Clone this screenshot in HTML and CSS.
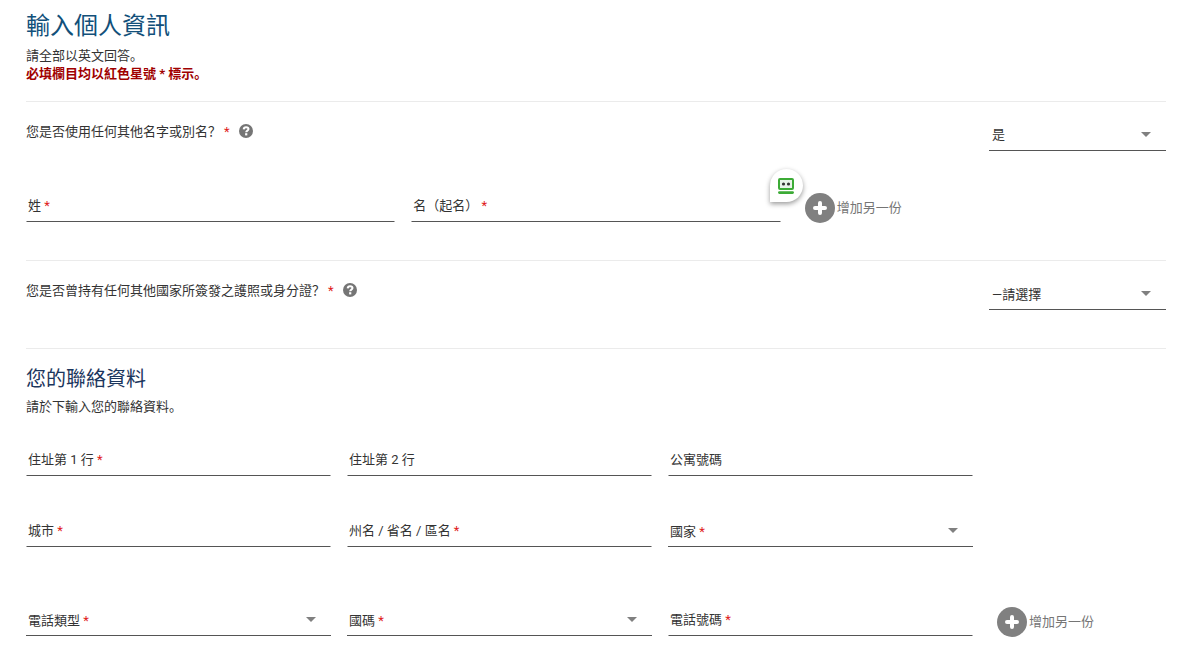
FILE: index.html
```html
<!DOCTYPE html>
<html lang="zh-Hant">
<head>
<meta charset="utf-8">
<meta name="viewport" content="width=device-width, initial-scale=1">
<title>輸入個人資訊</title>
<link rel="stylesheet" href="styles.css">
</head>
<body>
<svg class="sprite" aria-hidden="true">
  <symbol id="help" viewBox="0 0 14 14"><circle cx="7" cy="7" r="7" fill="#757575"/><path d="M4.700 5.400C4.800 3.900 5.800 3.200 7.100 3.200c1.400 0 2.400.8 2.400 1.900 0 1.600-2.300 1.500-2.300 3.200" fill="none" stroke="#fff" stroke-width="2"/><rect x="6.100" y="9.200" width="2.200" height="2.200" fill="#fff"/></symbol>
  <symbol id="plus" viewBox="0 0 30 30"><circle cx="15" cy="15" r="15" fill="#808080"/><path d="M15 10v10M10 15h10" stroke="#fff" stroke-width="4" stroke-linecap="round"/></symbol>
  <symbol id="arrow" viewBox="0 0 10 5"><path d="M0 0h10L5 5z" fill="#808080"/></symbol>
</svg>
<form class="page">
  <header class="intro">
    <h1 class="title">輸入個人資訊</h1>
    <p class="text">請全部以英文回答。</p>
    <p class="text notice">必填欄目均以紅色星號 * 標示。</p>
  </header>

  <section class="section">
    <div class="grid-four">
      <div class="question">
        <label for="alias">您是否使用任何其他名字或別名？<span class="star">*</span></label>
        <button class="help" type="button" aria-label="說明"><svg class="help-icon"><use href="#help"/></svg></button>
      </div>
      <div class="field">
        <select class="control select" id="alias"><option>是</option><option>否</option></select>
        <svg class="arrow"><use href="#arrow"/></svg>
      </div>
    </div>
    <div class="grid-three">
      <div class="field">
        <input class="control" id="surname" type="text">
        <label class="label" for="surname">姓 <span class="star-tight">*</span></label>
      </div>
      <div class="field">
        <input class="control" id="given" type="text">
        <label class="label" for="given">名（起名） <span class="star-tight">*</span></label>
        <button class="badge" type="button" aria-label="自動填寫">
          <svg class="badge-icon" viewBox="0 0 16 16"><rect x="1" y="1" width="14" height="10" rx="1" fill="#e9f3e9" stroke="#3cab36" stroke-width="2"/><circle cx="5.500" cy="6" r="1.600" fill="#333"/><circle cx="10.500" cy="6" r="1.600" fill="#333"/><rect x="0" y="13.200" width="16" height="2.800" rx="1.400" fill="#3cab36"/></svg>
        </button>
      </div>
      <button class="add" type="button"><svg class="add-icon"><use href="#plus"/></svg>增加另一份</button>
    </div>
  </section>

  <section class="section">
    <div class="grid-four">
      <div class="question">
        <label for="passport">您是否曾持有任何其他國家所簽發之護照或身分證？<span class="star">*</span></label>
        <button class="help" type="button" aria-label="說明"><svg class="help-icon"><use href="#help"/></svg></button>
      </div>
      <div class="field">
        <select class="control select placeholder" id="passport"><option>—請選擇</option><option>是</option><option>否</option></select>
        <svg class="arrow"><use href="#arrow"/></svg>
      </div>
    </div>
  </section>

  <section class="section contact">
    <h2 class="subtitle">您的聯絡資料</h2>
    <p class="text">請於下輸入您的聯絡資料。</p>
    <div class="grid-four address">
      <div class="field">
        <input class="control" id="line1" type="text">
        <label class="label" for="line1">住址第 1 行 <span class="star-tight">*</span></label>
      </div>
      <div class="field">
        <input class="control" id="line2" type="text">
        <label class="label" for="line2">住址第 2 行</label>
      </div>
      <div class="field">
        <input class="control" id="flat" type="text">
        <label class="label" for="flat">公寓號碼</label>
      </div>
      <div class="field first">
        <input class="control" id="city" type="text">
        <label class="label" for="city">城市 <span class="star-tight">*</span></label>
      </div>
      <div class="field">
        <input class="control" id="state" type="text">
        <label class="label" for="state">州名 / 省名 / 區名 <span class="star-tight">*</span></label>
      </div>
      <div class="field">
        <select class="control select" id="country"><option></option></select>
        <label class="label label-select" for="country">國家 <span class="star-tight">*</span></label>
        <svg class="arrow"><use href="#arrow"/></svg>
      </div>
    </div>
    <div class="grid-four phone">
      <div class="field">
        <select class="control select" id="phone-type"><option></option></select>
        <label class="label label-select" for="phone-type">電話類型 <span class="star-tight">*</span></label>
        <svg class="arrow"><use href="#arrow"/></svg>
      </div>
      <div class="field">
        <select class="control select" id="code"><option></option></select>
        <label class="label label-select" for="code">國碼 <span class="star-tight">*</span></label>
        <svg class="arrow"><use href="#arrow"/></svg>
      </div>
      <div class="field">
        <input class="control" id="phone" type="tel">
        <label class="label" for="phone">電話號碼 <span class="star-tight">*</span></label>
      </div>
      <button class="add" type="button"><svg class="add-icon"><use href="#plus"/></svg>增加另一份</button>
    </div>
  </section>
</form>
</body>
</html>
```

FILE: styles.css
```css
* { box-sizing: border-box; }

body {
  margin: 0;
  background: #fff;
  color: #333;
  font: 13px/18px Roboto, "Noto Sans CJK SC", sans-serif;
  font-feature-settings: "locl" 0;
}

button, input, select {
  font: inherit;
  font-feature-settings: inherit;
  color: inherit;
}

button {
  border: 0;
  padding: 0;
  background: none;
  cursor: pointer;
}

.sprite { position: absolute; width: 0; height: 0; }

.page { padding: 9px 11px 12px 26px; }

.intro { padding-bottom: 18px; }

.title {
  margin: 0 0 4px;
  color: #12507a;
  font-size: 24px;
  line-height: 34px;
  font-weight: 400;
}

.text { margin: 0; }

.notice { color: #a00000; font-weight: 700; }

.section {
  border-top: 1px solid #ebebeb;
  padding: 17px 0 38px;
}

.contact { padding: 16px 0 0; }

.subtitle {
  margin: 0 0 5px;
  color: #1b365d;
  font-size: 20px;
  line-height: 28px;
  font-weight: 400;
}

.grid-four {
  display: grid;
  grid-template-columns: 305fr 305fr 305fr 177fr;
  gap: 39px 16px;
}

.grid-three {
  display: grid;
  grid-template-columns: repeat(3, 1fr);
  gap: 16px;
  margin-top: 39px;
}

.address { margin-top: 28px; }
.phone { margin-top: 57px; }
.first { grid-column: 1; }

.question {
  grid-column: span 3;
  display: flex;
  align-items: flex-start;
  align-self: start;
  gap: 9px;
  margin-top: 4px;
}

.help, .help-icon { display: block; width: 14px; height: 14px; }
.help { margin-top: 1px; }

.star, .star-tight { color: #e01b1b; }
.star { margin-left: 3px; }

.field { display: grid; position: relative; align-self: start; }
.field > * { grid-area: 1 / 1; }

.control {
  width: 100%;
  height: 32px;
  margin: 0;
  padding: 0 3px;
  border: 1px solid transparent;
  border-bottom-color: #555;
  border-radius: 0;
  background: transparent;
  appearance: none;
  outline: 0;
}

.select { border-width: 0 0 1px; }
.placeholder { padding-top: 3px; }

.label {
  align-self: center;
  justify-self: start;
  padding-left: 2px;
  pointer-events: none;
}

.label-select { padding-top: 2px; }

.arrow {
  align-self: center;
  justify-self: end;
  width: 10px;
  height: 5px;
  margin: 0 15px 2px 0;
  pointer-events: none;
}

.add {
  display: flex;
  align-items: center;
  justify-self: start;
  align-self: start;
  gap: 2px;
  margin: 3px 0 -1px 8px;
  color: #757575;
}

.add-icon { width: 30px; height: 30px; }

/* Autofill badge hanging over the corner of its field */
.badge {
  position: absolute;
  top: -21px;
  right: -22px;
  display: grid;
  place-items: center;
  width: 33px;
  height: 33px;
  border-radius: 50% 50% 50% 0;
  background: #fff;
  box-shadow: 0 2px 5px rgba(0, 0, 0, 0.4);
}

.badge-icon { width: 16px; height: 16px; }
```
